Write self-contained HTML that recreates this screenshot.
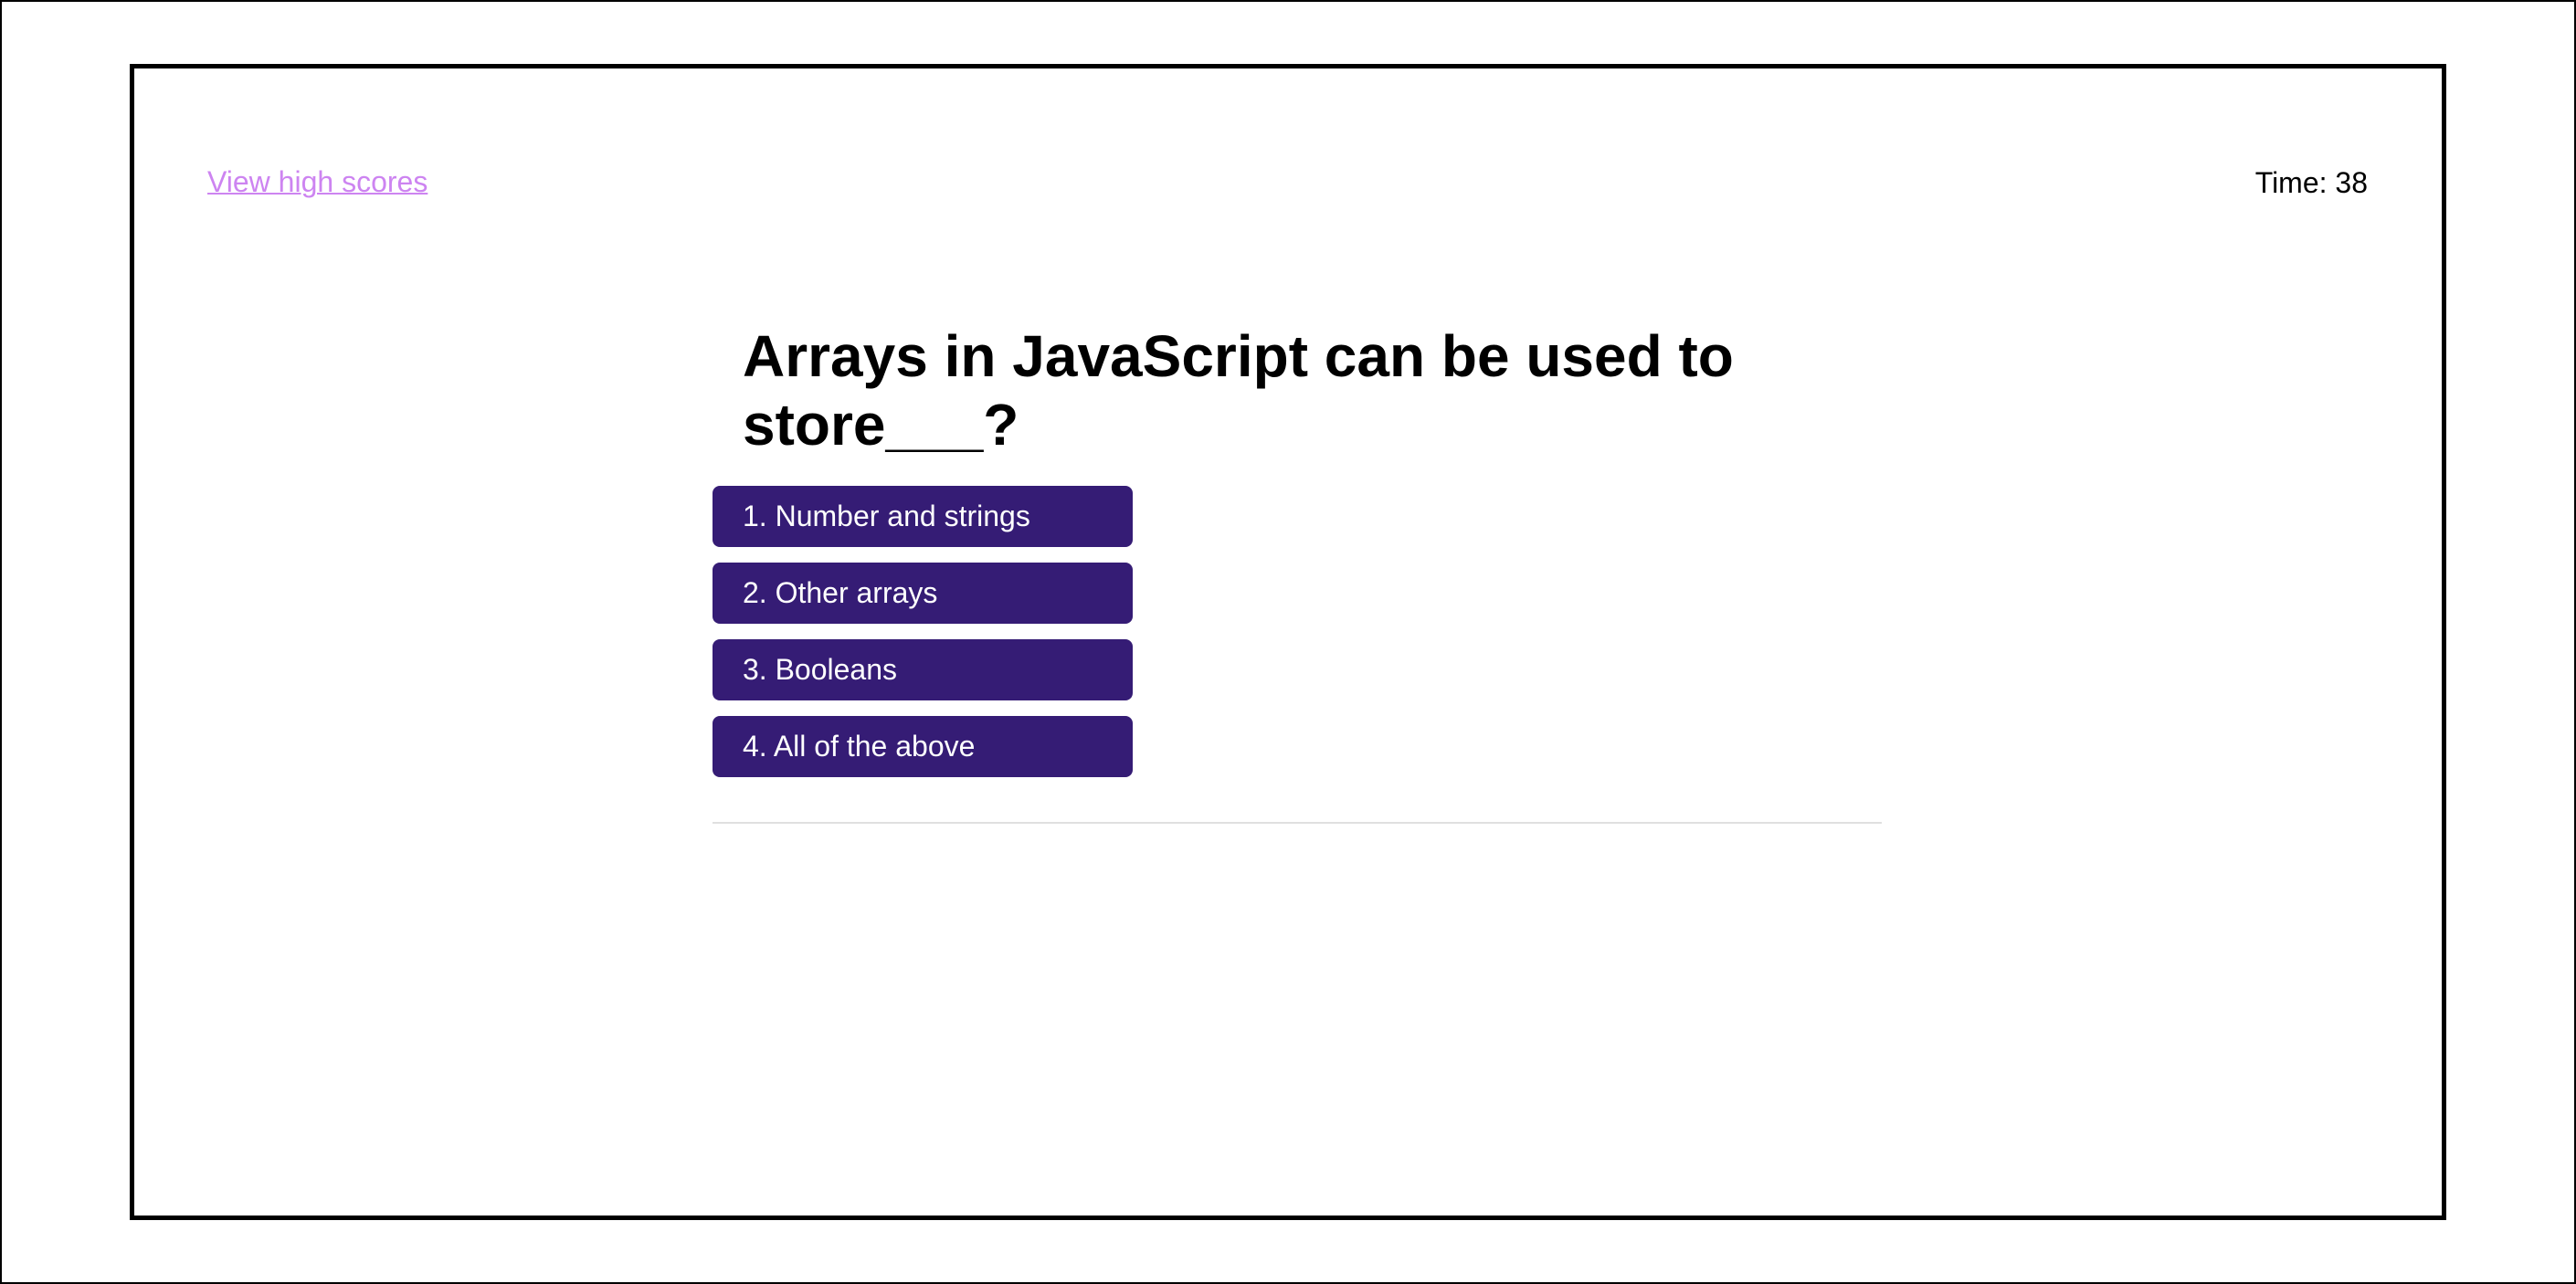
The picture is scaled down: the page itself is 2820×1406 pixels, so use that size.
<!DOCTYPE html>
<html><head><meta charset="utf-8"><style>
html,body{margin:0;padding:0;}
body{width:2820px;height:1406px;position:relative;background:#fff;font-family:"Liberation Sans",Arial,sans-serif;overflow:hidden;}
.outer{position:absolute;left:0;top:0;width:2816px;height:1402px;border:2px solid #000;}
.frame{position:absolute;left:142px;top:70px;width:2526px;height:1256px;border:5px solid #000;}
.link{position:absolute;left:227px;top:183px;font-size:32px;line-height:32px;color:#cd84f1;text-decoration:underline;text-decoration-thickness:2px;white-space:nowrap;}
.time{position:absolute;right:228px;top:184px;font-size:32px;line-height:32px;color:#000;white-space:nowrap;}
h1{position:absolute;left:813px;top:353px;margin:0;font-size:64px;line-height:75px;font-weight:bold;white-space:nowrap;}
.btn{position:absolute;left:780px;width:460px;height:67px;border-radius:8px;background:#351c75;color:#fff;font-size:32px;line-height:67px;box-sizing:border-box;padding-left:33px;white-space:nowrap;}
.hr{position:absolute;left:780px;top:900px;width:1280px;height:2px;background:#e0e0e0;}
</style></head><body>
<div class="outer"></div>
<div class="frame"></div>
<div class="link">View high scores</div>
<div class="time">Time: 38</div>
<h1>Arrays in JavaScript can be used to<br>store___?</h1>
<div class="btn" style="top:532px">1. Number and strings</div>
<div class="btn" style="top:616px">2. Other arrays</div>
<div class="btn" style="top:700px">3. Booleans</div>
<div class="btn" style="top:784px">4. All of the above</div>
<div class="hr"></div>
</body></html>
